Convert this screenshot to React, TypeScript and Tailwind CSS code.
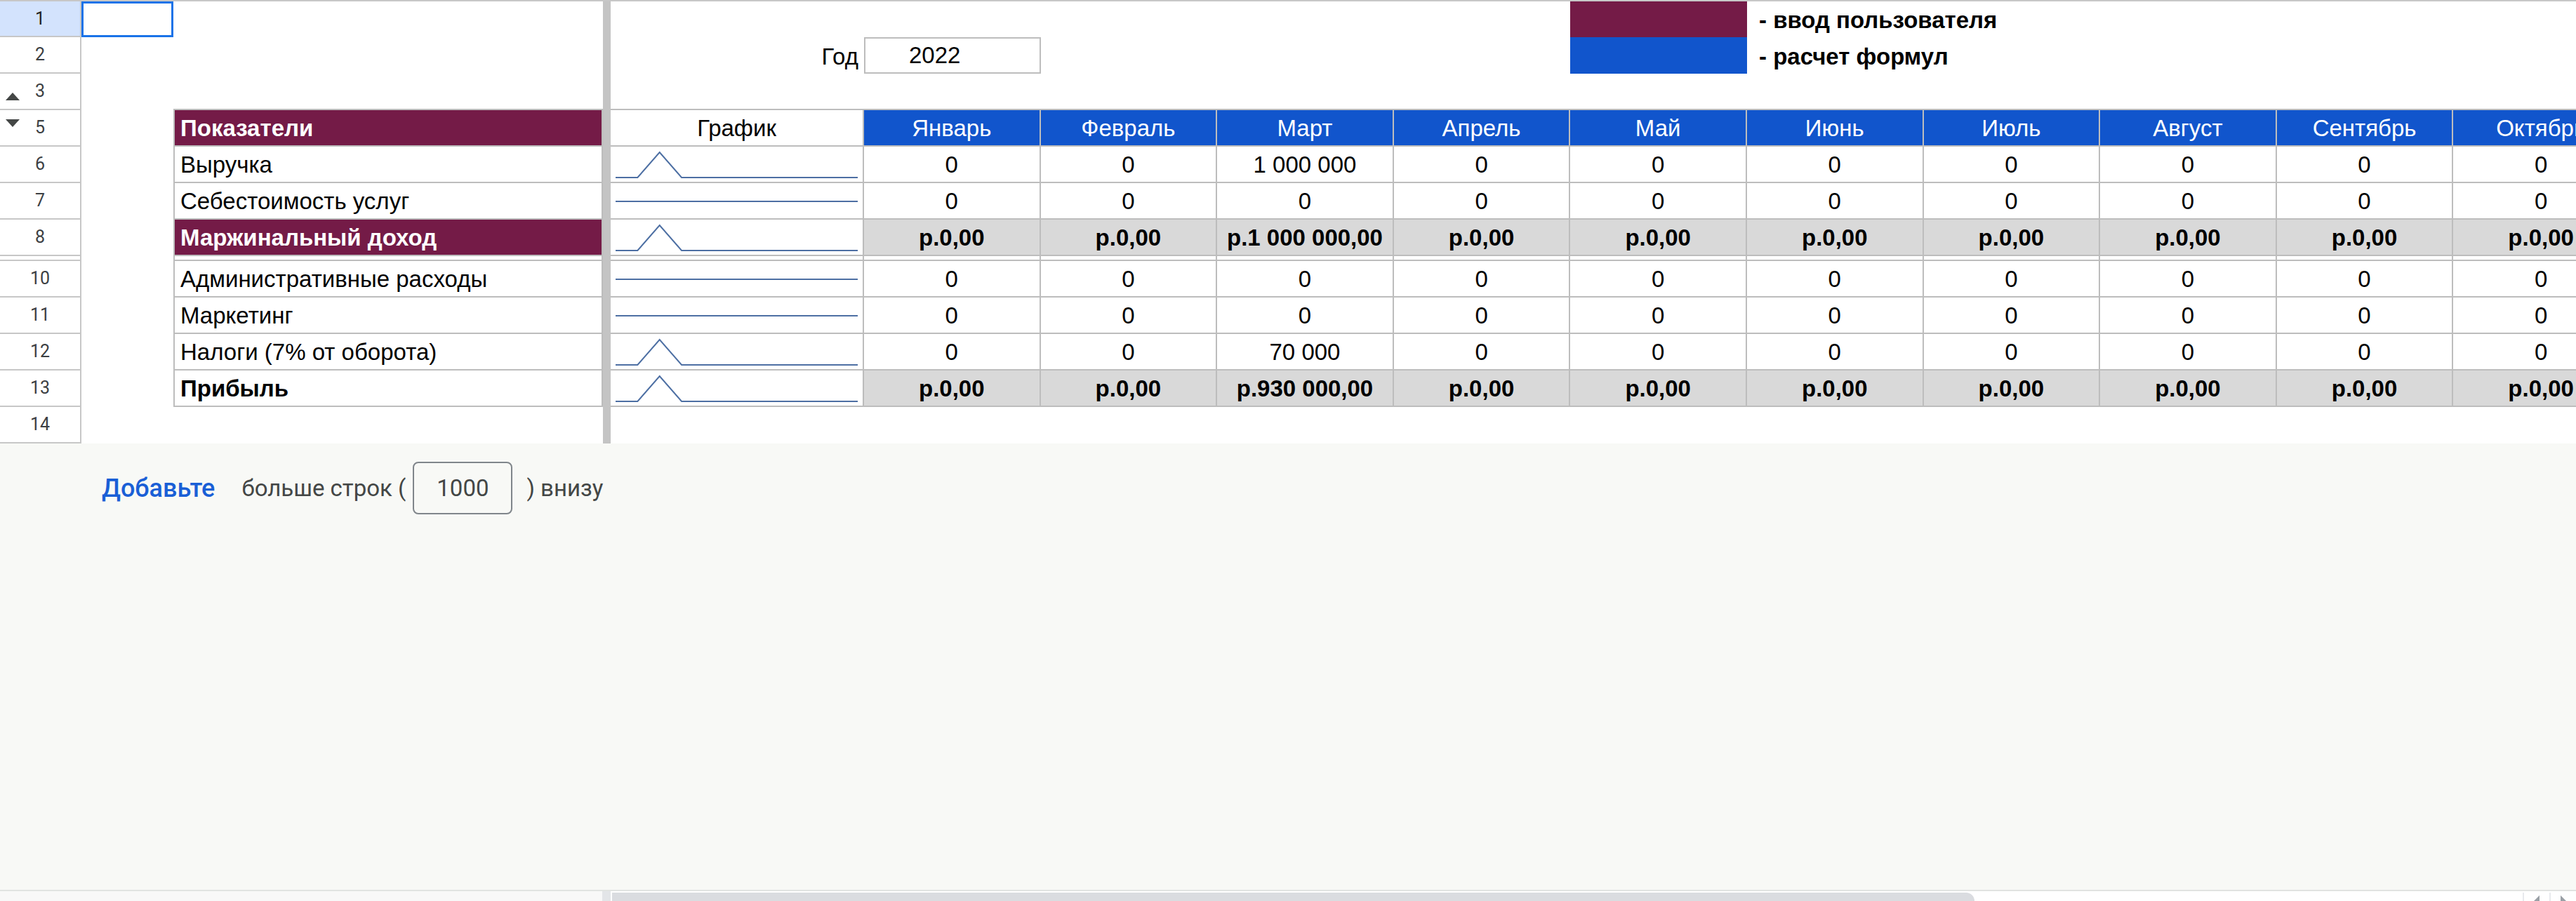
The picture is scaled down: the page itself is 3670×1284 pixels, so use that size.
import React from "react";

const MONTHS = [
  "Январь",
  "Февраль",
  "Март",
  "Апрель",
  "Май",
  "Июнь",
  "Июль",
  "Август",
  "Сентябрь",
  "Октябрь",
  "Ноябрь",
  "Декабрь",
];

type Row = {
  num: number;
  label: string;
  kind: "input" | "total" | "bold";
  values: string[];
  series: number[];
};

const zeros = (n: number) => Array.from({ length: n }, () => 0);
const withPeak = (v: number) => zeros(12).map((_, i) => (i === 2 ? v : 0));
const plain = (mid: string) => MONTHS.map((_, i) => (i === 2 ? mid : "0"));
const rub = (mid: string) => MONTHS.map((_, i) => (i === 2 ? mid : "р.0,00"));

const ROWS: Row[] = [
  { num: 6, label: "Выручка", kind: "input", values: plain("1 000 000"), series: withPeak(1000000) },
  { num: 7, label: "Себестоимость услуг", kind: "input", values: plain("0"), series: zeros(12) },
  { num: 8, label: "Маржинальный доход", kind: "total", values: rub("р.1 000 000,00"), series: withPeak(1000000) },
  { num: 10, label: "Административные расходы", kind: "input", values: plain("0"), series: zeros(12) },
  { num: 11, label: "Маркетинг", kind: "input", values: plain("0"), series: zeros(12) },
  { num: 12, label: "Налоги (7% от оборота)", kind: "input", values: plain("70 000"), series: withPeak(70000) },
  { num: 13, label: "Прибыль", kind: "bold", values: rub("р.930 000,00"), series: withPeak(930000) },
];

function Spark({ series }: { series: number[] }) {
  const max = Math.max(...series);
  const min = Math.min(...series);
  const pts = series
    .map((v, i) => {
      const x = 7 + (i * 345) / 11;
      const y = max === min ? 26 : 44 - ((v - min) / (max - min)) * 36;
      return `${x},${y}`;
    })
    .join(" ");
  return (
    <svg width="359" height="50" className="block">
      <polyline points={pts} fill="none" stroke="#4d6fa3" strokeWidth="2" strokeLinejoin="miter" />
    </svg>
  );
}

function RowHead({ num, active, children }: { num?: number; active?: boolean; children?: React.ReactNode }) {
  return (
    <div
      className={`relative w-[116px] shrink-0 flex items-center justify-center border-r-2 border-b-2 border-[#c7c7c7] text-[25px] font-['Roboto',sans-serif] ${
        active ? "bg-[#d3e3fd] text-[#1f1f1f]" : "bg-white text-[#3c4043]"
      }`}
    >
      {num}
      {children}
    </div>
  );
}

function Divider() {
  return <div className="w-[11px] shrink-0 bg-[#c4c4c4]" />;
}

export default function App() {
  const cell = "shrink-0 border-r-2 border-b-2 border-[#bdbdbd]";
  return (
    <div className="w-[3670px] h-[1284px] overflow-hidden flex flex-col bg-white font-['Liberation_Sans',Arial,sans-serif] text-black">
      <div className="h-[2px] shrink-0 bg-[#c7c7c7]" />

      {/* row 1 */}
      <div className="h-[51px] shrink-0 flex">
        <RowHead num={1} active />
        <div className="w-[131px] shrink-0 border-[3px] border-[#1a73e8]" />
        <div className="w-[612px] shrink-0" />
        <Divider />
        <div className="w-[361px] shrink-0" />
        {MONTHS.map((m, i) => (
          <div key={m} className={`w-[251.6px] shrink-0 ${i === 4 ? "bg-[#741b47]" : ""}`}>
            {i === 5 && (
              <div className="h-full flex items-end pl-[17px] whitespace-nowrap text-[33px] font-bold leading-normal">
                - ввод пользователя
              </div>
            )}
          </div>
        ))}
      </div>

      {/* row 2 */}
      <div className="h-[52px] shrink-0 flex">
        <RowHead num={2} />
        <div className="w-[131px] shrink-0" />
        <div className="w-[612px] shrink-0" />
        <Divider />
        <div className="w-[361px] shrink-0 flex items-end justify-end pr-[8px] text-[33px] leading-normal">
          Год
        </div>
        {MONTHS.map((m, i) => (
          <div
            key={m}
            className={`w-[251.6px] shrink-0 ${i === 0 ? "border-2 border-[#bdbdbd] flex items-end pl-[62px] text-[33px] leading-normal" : ""} ${
              i === 4 ? "bg-[#1155cc]" : ""
            }`}
          >
            {i === 0 && "2022"}
            {i === 5 && (
              <div className="h-full flex items-end pl-[17px] whitespace-nowrap text-[33px] font-bold leading-normal">
                - расчет формул
              </div>
            )}
          </div>
        ))}
      </div>

      {/* row 3 (row 4 hidden) */}
      <div className="h-[52px] shrink-0 flex">
        <RowHead num={3}>
          <svg width="20" height="11" className="absolute left-[8px] bottom-[12px]">
            <polygon points="0,11 10,0 20,11" fill="#444746" />
          </svg>
        </RowHead>
        <div className="w-[131px] shrink-0" />
        <div className="w-[612px] shrink-0 border-b-2 border-[#bdbdbd]" />
        <Divider />
        <div className="w-[361px] shrink-0 border-b-2 border-[#bdbdbd]" />
        {MONTHS.map((m) => (
          <div key={m} className="w-[251.6px] shrink-0 border-b-2 border-[#bdbdbd]" />
        ))}
      </div>

      {/* row 5: headers */}
      <div className="h-[52px] shrink-0 flex">
        <RowHead num={5}>
          <svg width="20" height="11" className="absolute left-[8px] top-[13px]">
            <polygon points="0,0 20,0 10,11" fill="#444746" />
          </svg>
        </RowHead>
        <div className="w-[131px] shrink-0" />
        <div className={`w-[612px] ${cell} border-l-2 bg-[#741b47] text-white font-bold flex items-end pl-[8px] text-[33px] leading-normal`}>
          Показатели
        </div>
        <Divider />
        <div className={`w-[361px] ${cell} flex items-end justify-center text-[33px] leading-normal`}>График</div>
        {MONTHS.map((m) => (
          <div
            key={m}
            className={`w-[251.6px] ${cell} bg-[#1155cc] text-white flex items-end justify-center text-[33px] leading-normal`}
          >
            {m}
          </div>
        ))}
      </div>

      {ROWS.map((r) => (
        <React.Fragment key={r.num}>
          {r.num === 10 && (
            <div className="h-[7px] shrink-0 flex">
              <RowHead />
              <div className="w-[131px] shrink-0" />
              <div className={`w-[612px] ${cell} border-l-2`} />
              <Divider />
              <div className={`w-[361px] ${cell}`} />
              {MONTHS.map((m) => (
                <div key={m} className={`w-[251.6px] ${cell}`} />
              ))}
            </div>
          )}
          <div className="h-[52px] shrink-0 flex">
            <RowHead num={r.num} />
            <div className="w-[131px] shrink-0" />
            <div
              className={`w-[612px] ${cell} border-l-2 flex items-end pl-[8px] text-[33px] leading-normal whitespace-nowrap ${
                r.kind === "total" ? "bg-[#741b47] text-white font-bold" : r.kind === "bold" ? "font-bold" : ""
              }`}
            >
              {r.label}
            </div>
            <Divider />
            <div className={`w-[361px] ${cell}`}>
              <Spark series={r.series} />
            </div>
            {r.values.map((v, i) => (
              <div
                key={i}
                className={`w-[251.6px] ${cell} flex items-end justify-center text-[33px] leading-normal whitespace-nowrap ${
                  r.kind === "input" ? "" : "bg-[#d9d9d9] font-bold"
                }`}
              >
                {v}
              </div>
            ))}
          </div>
        </React.Fragment>
      ))}

      {/* row 14 */}
      <div className="h-[52px] shrink-0 flex">
        <RowHead num={14} />
        <div className="w-[743px] shrink-0" />
        <Divider />
        <div className="flex-1" />
      </div>

      {/* add rows footer */}
      <div className="flex-1 bg-[#f8f9f6] border-b-2 border-[#e1e3e1] font-['Roboto',sans-serif]">
        <div className="flex items-center pl-[145px] pt-[26px] h-[101px]">
          <span className="text-[#1a5fd6] font-medium text-[36px]">Добавьте</span>
          <span className="ml-[38px] text-[#444746] text-[33px]">больше строк (</span>
          <div className="ml-[10px] w-[142px] h-[75px] rounded-[8px] border-2 border-[#80868b] flex items-center justify-center text-[33px] text-[#444746]">
            1000
          </div>
          <span className="ml-[20px] text-[#444746] text-[33px]">) внизу</span>
        </div>
      </div>

      {/* horizontal scrollbars */}
      <div className="h-[14px] shrink-0 flex">
        <div className="w-[858px] shrink-0 bg-[#f8f8f8]" />
        <div className="w-[12px] shrink-0 bg-[#e3e5e8]" />
        <div className="flex-1 flex items-end pt-[2px] bg-white">
          <div className="ml-[2px] w-[1941px] h-full bg-[#dadce0] rounded-tr-[12px]" />
          <div className="flex-1" />
          <div className="w-[38px] h-full border-l-2 border-[#e8eaed] flex items-end justify-center">
            <svg width="8" height="8"><polygon points="8,0 8,8 0,8" fill="#9aa0a6" /></svg>
          </div>
          <div className="w-[38px] h-full border-l-2 border-[#e8eaed] flex items-end justify-center">
            <svg width="8" height="8"><polygon points="0,0 8,8 0,8" fill="#9aa0a6" /></svg>
          </div>
        </div>
      </div>
    </div>
  );
}
